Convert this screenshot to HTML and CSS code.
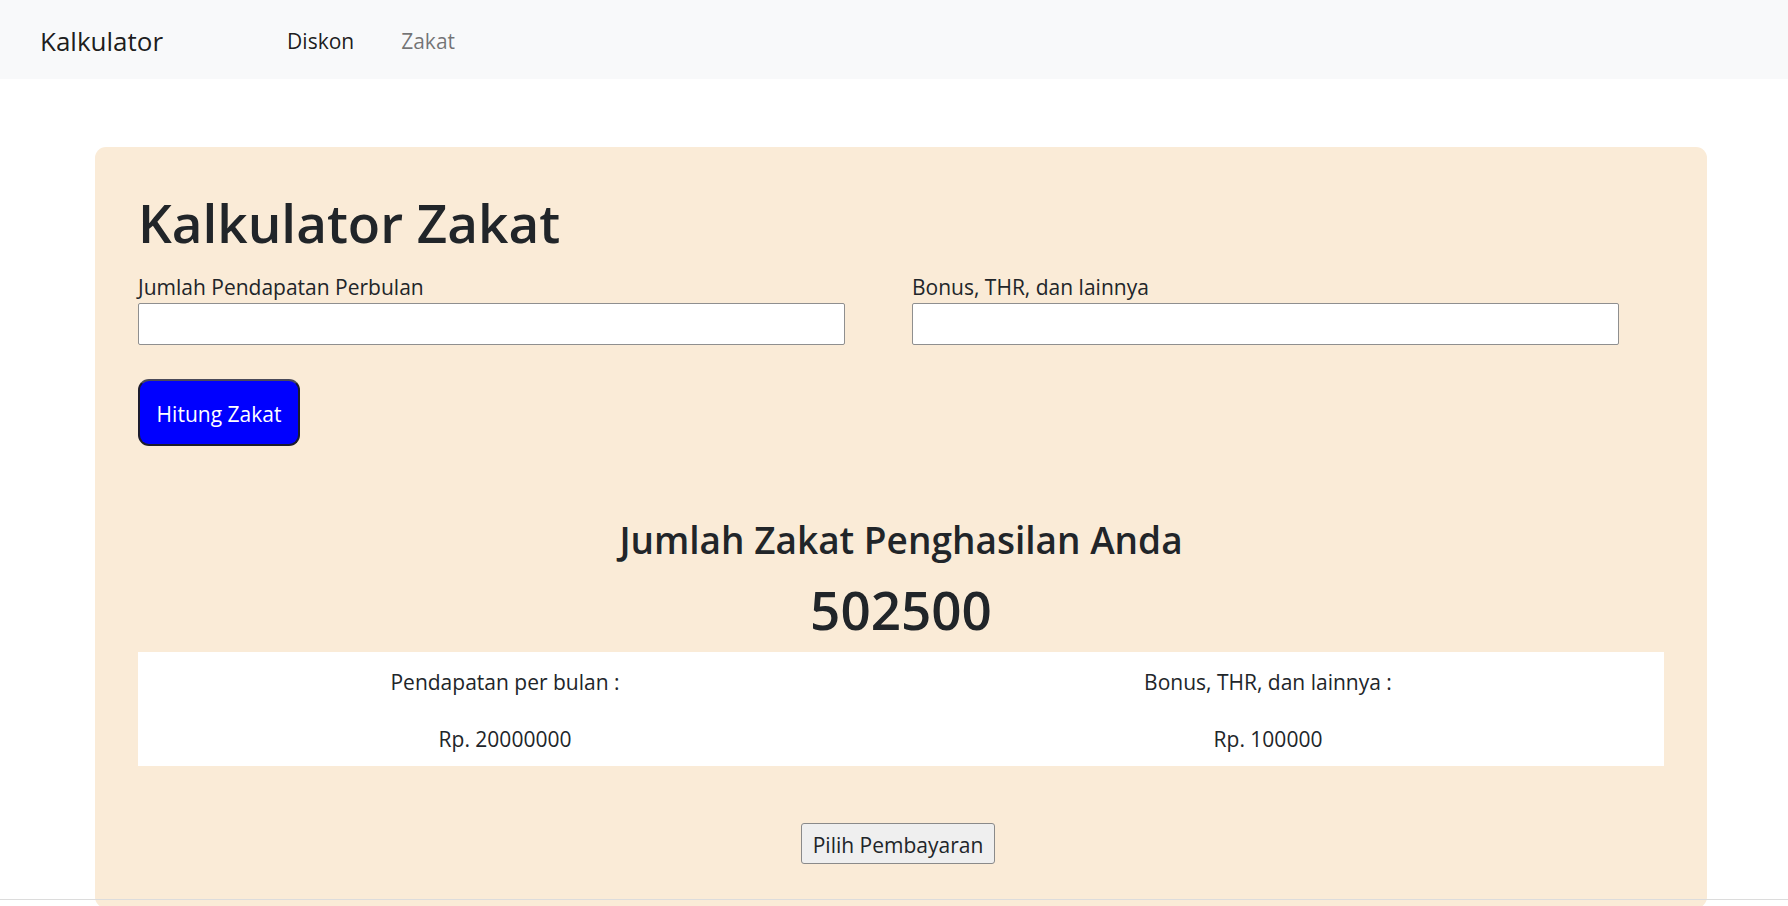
FILE: index.html
```html
<!DOCTYPE html>
<html lang="id">
<head>
<meta charset="utf-8">
<title>Kalkulator Zakat</title>
<link rel="stylesheet" href="styles.css">
</head>
<body>
<nav class="navbar">
  <a class="brand" href="#">Kalkulator</a>
  <ul class="nav">
    <li><a class="nav-link active" href="#">Diskon</a></li>
    <li><a class="nav-link" href="#">Zakat</a></li>
  </ul>
</nav>

<main class="card">
  <h1 class="title">Kalkulator Zakat</h1>
  <div class="fields">
    <div class="field">
      <label class="label" for="gaji">Jumlah Pendapatan Perbulan</label>
      <input class="input" id="gaji" type="text">
    </div>
    <div class="field">
      <label class="label" for="bonus">Bonus, THR, dan lainnya</label>
      <input class="input" id="bonus" type="text">
    </div>
  </div>
  <button class="btn-hitung" type="button">Hitung Zakat</button>

  <section class="result">
    <h3 class="result-title">Jumlah Zakat Penghasilan Anda</h3>
    <div class="result-total">502500</div>
  </section>

  <table class="detail">
    <tbody>
      <tr>
        <td>Pendapatan per bulan :</td>
        <td>Bonus, THR, dan lainnya :</td>
      </tr>
      <tr>
        <td>Rp. 20000000</td>
        <td>Rp. 100000</td>
      </tr>
    </tbody>
  </table>

  <div class="pay">
    <button class="btn-pay" type="button">Pilih Pembayaran</button>
  </div>
</main>

<div class="window-edge"></div>
</body>
</html>
```

FILE: styles.css
```css
* { box-sizing: border-box; }

html, body {
  margin: 0;
  height: 100%;
  overflow: hidden;
}

body {
  font-family: "Open Sans", "Noto Sans", sans-serif;
  font-size: 21px;
  line-height: 1.6;
  color: #212529;
  background: #ffffff;
}

.navbar {
  height: 79px;
  background: #f8f9fa;
  display: flex;
  align-items: center;
  padding: 4px 40px 0;
}

.brand {
  font-size: 26px;
  color: rgba(0, 0, 0, 0.9);
  text-decoration: none;
  margin-right: 124px;
  line-height: 1;
  padding-bottom: 2px;
}

.nav {
  list-style: none;
  margin: 0;
  padding: 0;
  display: flex;
  gap: 47px;
}

.nav-link {
  font-size: 21px;
  color: rgba(0, 0, 0, 0.55);
  text-decoration: none;
}

.nav-link.active {
  color: rgba(0, 0, 0, 0.9);
}

.card {
  margin: 68px 81px 0 95px;
  background: #faebd7;
  border-radius: 11px;
  padding: 42px 43px 44px 43px;
}

.title {
  margin: 0 0 14px;
  font-size: 53px;
  font-weight: 600;
  line-height: 67px;
}

.fields {
  display: grid;
  grid-template-columns: 707px 707px;
  column-gap: 67px;
}

.field {
  display: flex;
  flex-direction: column;
}

.label {
  padding-top: 2px;
  line-height: 31px;
}

.input {
  height: 42px;
  border: 1px solid #8f8f8f;
  border-radius: 2px;
  background: #fff;
  font: inherit;
  padding: 2px 8px;
}

.btn-hitung {
  margin-top: 34px;
  width: 162px;
  height: 67px;
  background: #0000ff;
  color: #fff;
  font: inherit;
  font-size: 21px;
  border: 2px solid #1b1b2e;
  border-top-color: #4a4a5a;
  border-radius: 11px;
  padding: 5px 0 0;
}

.result {
  margin-top: 70px;
  text-align: center;
}

.result-title {
  margin: 0 0 13px;
  font-size: 37px;
  font-weight: 600;
  line-height: 47px;
}

.result-total {
  font-size: 53px;
  font-weight: 600;
  line-height: 67px;
}

.detail {
  margin-top: 9px;
  width: 100%;
  border-collapse: collapse;
  background: #fff;
}

.detail td {
  width: 50%;
  text-align: center;
  padding: 13px 40px 9px 11px;
  line-height: 35px;
}

.pay {
  margin-top: 57px;
  text-align: center;
}

.btn-pay {
  font: inherit;
  font-size: 21px;
  line-height: 33px;
  color: #212529;
  background: #efefef;
  border: 1px solid #8a8a8a;
  border-radius: 3px;
  padding: 5px 11px 1px;
  margin-right: 6px;
}

.window-edge {
  position: fixed;
  left: 0;
  right: 0;
  top: 899px;
  height: 1px;
  background: #dcdcdc;
}
```
